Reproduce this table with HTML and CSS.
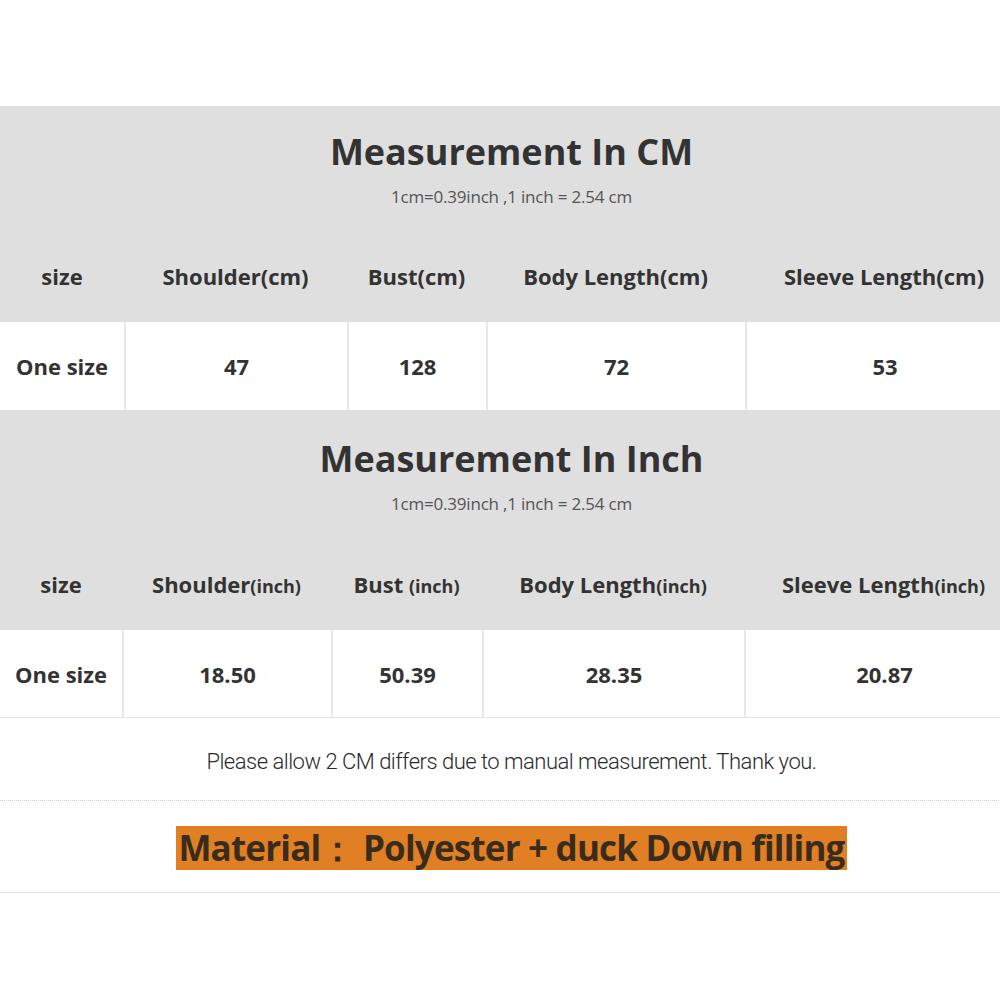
FILE: index.html
```html
<!DOCTYPE html>
<html>
<head>
<meta charset="utf-8">
<link rel="stylesheet" href="styles.css">
</head>
<body>
<div class="page">
  <section class="table t1">
    <div class="gray">
      <h1 class="title">Measurement In CM</h1>
      <div class="sub">1cm=0.39inch ,1 inch = 2.54 cm</div>
      <div class="row head cols1">
        <div class="cell">size</div>
        <div class="cell">Shoulder(cm)</div>
        <div class="cell">Bust(cm)</div>
        <div class="cell">Body Length(cm)</div>
        <div class="cell">Sleeve Length(cm)</div>
      </div>
    </div>
    <div class="row data cols1">
      <div class="cell">One size</div>
      <div class="cell">47</div>
      <div class="cell">128</div>
      <div class="cell">72</div>
      <div class="cell">53</div>
    </div>
  </section>
  <section class="table t2">
    <div class="gray">
      <h1 class="title">Measurement In Inch</h1>
      <div class="sub">1cm=0.39inch ,1 inch = 2.54 cm</div>
      <div class="row head cols2">
        <div class="cell">size</div>
        <div class="cell"><span>Shoulder<span class="unit">(inch)</span></span></div>
        <div class="cell"><span>Bust <span class="unit">(inch)</span></span></div>
        <div class="cell"><span>Body Length<span class="unit">(inch)</span></span></div>
        <div class="cell"><span>Sleeve Length<span class="unit">(inch)</span></span></div>
      </div>
    </div>
    <div class="row data cols2 last">
      <div class="cell">One size</div>
      <div class="cell">18.50</div>
      <div class="cell">50.39</div>
      <div class="cell">28.35</div>
      <div class="cell">20.87</div>
    </div>
  </section>
  <div class="note">Please allow 2 CM differs due to manual measurement. Thank you.</div>
  <div class="material"><span class="mark">Material：&nbsp;Polyester + duck Down filling</span></div>
</div>
</body>
</html>
```

FILE: styles.css
```css
html, body {
  margin: 0;
  padding: 0;
  background: #ffffff;
  overflow: hidden;
}
.page {
  width: 1023px;
  padding-top: 106px;
  font-family: "Open Sans", "Noto Sans", sans-serif;
  color: #333333;
}
.gray {
  background: #dfdfdf;
  display: flex;
  flex-direction: column;
  align-items: stretch;
}
.t1 .gray { padding-top: 16px; }
.t2 .gray { padding-top: 19px; }
.title {
  margin: 0;
  height: 60px;
  line-height: 60px;
  text-align: center;
  font-size: 36px;
  font-weight: 700;
  color: #333333;
}
.sub {
  height: 30px;
  line-height: 30px;
  text-align: center;
  font-size: 17px;
  letter-spacing: -0.2px;
  color: #555555;
}
.row {
  display: grid;
}
.cols1 { grid-template-columns: 124px 223px 139px 259px 278px; }
.cols2 { grid-template-columns: 122px 209px 151px 262px 279px; }
.head {
  margin-top: 20px;
  height: 90px;
  padding-bottom: 2px;
  box-sizing: border-box;
}
.t2 .head { height: 91px; }
.cell {
  display: flex;
  align-items: center;
  justify-content: center;
  font-weight: 700;
  font-size: 22px;
  white-space: nowrap;
}
.unit { font-size: 18px; }
.data {
  height: 88px;
  background: #ffffff;
}
.data .cell + .cell { border-left: 2px solid #e8e8e8; }
.data.last { border-bottom: 1px solid #e2e2e2; height: 87px; }
.note {
  height: 83px;
  padding-top: 4px;
  box-sizing: border-box;
  display: flex;
  align-items: center;
  justify-content: center;
  font-family: "Roboto", "Open Sans", sans-serif;
  font-size: 22px;
  font-weight: 300;
  letter-spacing: -0.5px;
  color: #2a2a2a;
  border-bottom: 1px dotted #cfcfcf;
}
.material {
  height: 92px;
  box-sizing: border-box;
  padding-top: 2px;
  display: flex;
  align-items: center;
  justify-content: center;
  border-bottom: 1px solid #e0e0e0;
}
.mark {
  background: #e07f24;
  color: #3a2c1c;
  font-weight: 700;
  font-size: 35px;
  line-height: 44px;
  height: 44px;
  padding: 0 2px;
  letter-spacing: -0.8px;
  white-space: nowrap;
}
```
